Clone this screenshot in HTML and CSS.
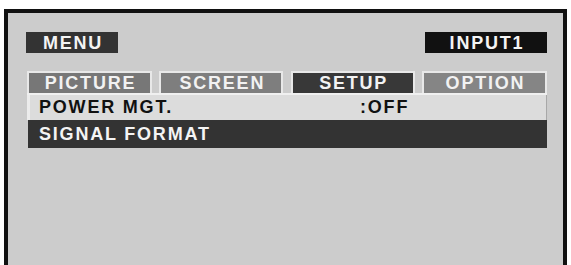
FILE: index.html
```html
<!DOCTYPE html>
<html>
<head>
<meta charset="utf-8">
<link rel="stylesheet" href="styles.css">
</head>
<body>
<div class="screen">
  <div class="header">
    <div class="label menu">MENU</div>
    <div class="label input">INPUT1</div>
  </div>
  <div class="tabs">
    <div class="tab picture">PICTURE</div>
    <div class="tab screen-tab">SCREEN</div>
    <div class="tab setup">SETUP</div>
    <div class="tab option">OPTION</div>
  </div>
  <div class="rows">
    <div class="row power"><span class="name">POWER MGT.</span><span class="value">:OFF</span></div>
    <div class="row signal"><span class="name">SIGNAL FORMAT</span></div>
  </div>
</div>
</body>
</html>
```
FILE: styles.css
```css
html, body {
  margin: 0;
  padding: 0;
  background: #ffffff;
}
body {
  width: 571px;
  height: 265px;
  overflow: hidden;
  font-family: "Liberation Sans", Arial, sans-serif;
  font-weight: bold;
  font-size: 18px;
  letter-spacing: 1.8px;
}
.screen {
  margin: 9px 0 0 4px;
  width: 563px;
  height: 256px;
  border: 4px solid #111;
  border-bottom: none;
  background: #cccccc;
  padding: 19px 16px 0 18px;
  box-sizing: border-box;
}
.header {
  display: flex;
  justify-content: space-between;
  align-items: flex-start;
}
.label {
  height: 21px;
  line-height: 22px;
  color: #f4f4f4;
  text-align: center;
  text-indent: 2px;
}
.menu {
  width: 92px;
  background: #333333;
}
.input {
  width: 122px;
  background: #111111;
}
.tabs {
  margin-top: 18px;
  display: grid;
  grid-template-columns: 125px 124px 124px 125px;
  justify-content: space-between;
  margin-left: 1px;
}
.tab {
  height: 20px;
  line-height: 21px;
  border: 2px solid #e8e8e8;
  border-bottom: none;
  color: #f2f2f2;
  text-align: center;
  text-indent: 2px;
}
.picture { background: #777777; }
.screen-tab { background: #7e7e7e; }
.setup { background: #383838; }
.option { background: #858585; }
.rows {
  margin-left: 1px;
  border-top: 2px solid #f0f0f0;
}
.row {
  display: flex;
  align-items: center;
}
.power {
  height: 25px;
  background: #dcdcdc;
  border-left: 3px solid #ececec;
  border-right: 1px solid #a8a8a8;
  padding-left: 9px;
  color: #111;
}
.power .name {
  width: 321px;
}
.signal {
  height: 28px;
  background: #333333;
  color: #f4f4f4;
  margin-left: 1px;
  padding-left: 11px;
}
```
